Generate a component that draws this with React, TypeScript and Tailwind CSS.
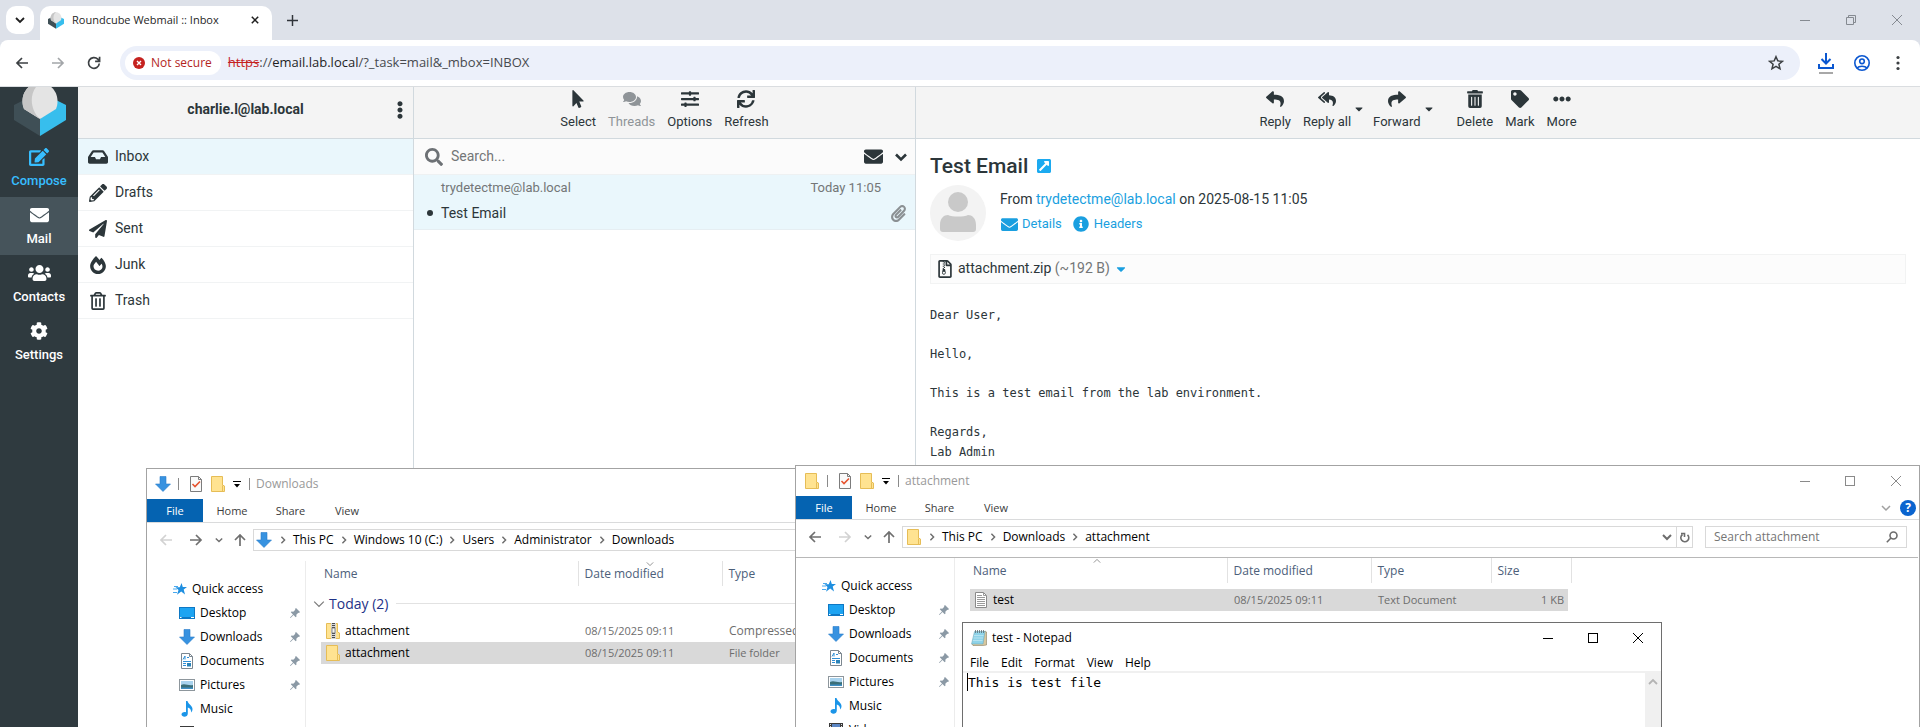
import React from 'react';
import {
  FaInbox, FaPencilAlt, FaPaperPlane, FaFireAlt, FaRegTrashAlt, FaMousePointer, FaComments, FaSlidersH, FaSync,
  FaReply, FaReplyAll, FaShare, FaTrashAlt, FaTag, FaEllipsisH, FaEllipsisV, FaInfoCircle, FaEnvelope, FaPaperclip,
  FaExternalLinkSquareAlt, FaRegFileArchive, FaCaretDown, FaSearch, FaEdit, FaUsers, FaCog, FaChevronDown,
} from 'react-icons/fa';

type IconType = React.ComponentType<{ className?: string }>;

const UI = "font-['Open_Sans',sans-serif]";

/* ---------- small drawings ---------- */

function CubeLogo({ className }: { className: string }) {
  return (
    <svg viewBox="0 0 52 53" className={className} aria-hidden="true">
      <path d="M0 22L10 17L26 36V53L0 37Z" fill="#3f4f56" />
      <path d="M52 22L42 17L26 36V53L52 37Z" fill="#37beed" />
      <path d="M26 0C36 0 43.500 8 43.500 18C43.500 21 43 23.500 42 26L26 36L10 26C9 23.500 8.500 21 8.500 18C8.500 8 16 0 26 0Z" fill="#e4e4e4" />
      <path d="M26 0C16 0 8.500 8 8.500 18C8.500 21 9 23.500 10 26L26 36C15 26 15 8 26 0Z" fill="#c6c6c6" />
    </svg>
  );
}

function Arrow({ className }: { className?: string }) {
  return (
    <svg viewBox="0 0 14 14" className={className} fill="none" stroke="currentColor" strokeWidth="1.7" aria-hidden="true">
      <path d="M13 7H2M7 2 L2 7 L7 12" />
    </svg>
  );
}

function Chevron({ className, width = 1.5 }: { className?: string; width?: number }) {
  return (
    <svg viewBox="0 0 10 10" className={className} fill="none" stroke="currentColor" strokeWidth={width} aria-hidden="true">
      <path d="M1 3 L5 7 L9 3" />
    </svg>
  );
}

function Minimize() {
  return <svg viewBox="0 0 10 10" className="size-[10px]" stroke="currentColor" shapeRendering="crispEdges" aria-hidden="true"><path d="M0 5.5H10" /></svg>;
}
function Maximize() {
  return <svg viewBox="0 0 10 10" className="size-[10px]" fill="none" stroke="currentColor" aria-hidden="true"><rect x="0.5" y="0.5" width="9" height="9" /></svg>;
}
function Cross() {
  return <svg viewBox="0 0 10 10" className="size-[10px]" fill="none" stroke="currentColor" aria-hidden="true"><path d="M0 0L10 10M10 0L0 10" /></svg>;
}

function BlueDown({ className = 'size-4' }: { className?: string }) {
  return (
    <svg viewBox="0 0 16 16" className={className} aria-hidden="true">
      <path d="M5 .5H11V8H15.500L8 15.500L.5 8H5Z" fill="#3792e0" stroke="#2a7cc9" strokeWidth=".6" />
    </svg>
  );
}
function Folder() {
  return (
    <svg viewBox="0 0 14 16" className="h-4 w-[14px]" aria-hidden="true">
      <path d="M.5 .5H11.500V9L13.500 10V15.500H.5Z" fill="#ffe391" stroke="#e6bd56" />
      <path d="M11.500 9.500V15.500" stroke="#e6bd56" />
    </svg>
  );
}
function ZipFolder() {
  return (
    <svg viewBox="0 0 14 16" className="h-4 w-[14px]" aria-hidden="true">
      <path d="M.5 .5H11.500V9L13.500 10V15.500H.5Z" fill="#ffe391" stroke="#e6bd56" />
      <rect x="5" width="5" height="16" fill="#d7d7d7" />
      <path d="M7.500 0V7M7.500 10V16" stroke="#4b4b4b" strokeWidth="3" strokeDasharray="1 1" />
      <rect x="6" y="5" width="3" height="5" fill="#f2f2f2" stroke="#666" strokeWidth=".7" />
    </svg>
  );
}
function CheckDoc() {
  return (
    <svg viewBox="0 0 12 16" className="h-4 w-3" fill="none" aria-hidden="true">
      <path d="M.5 .5H8.500L11.500 3.500V15.500H.5Z" fill="#fafafa" stroke="#7c7c7c" />
      <path d="M8.500 .5V3.500H11.500" stroke="#7c7c7c" />
      <path d="M2.500 8L5 10.500L10 5.500" stroke="#e6532f" strokeWidth="1.600" />
    </svg>
  );
}
function TextDoc() {
  return (
    <svg viewBox="0 0 12 16" className="h-4 w-3" fill="none" aria-hidden="true">
      <path d="M.5 .5H8.500L11.500 3.500V15.500H.5Z" fill="#fff" stroke="#8a8a8a" />
      <path d="M8.500 .5V3.500H11.500M2 3.500H7M2 5.500H10M2 7.500H10M2 9.500H10M2 11.500H10M2 13.500H10" stroke="#9a9a9a" />
    </svg>
  );
}
function DocumentsIcon() {
  return (
    <svg viewBox="0 0 12 16" className="h-4 w-3" fill="none" aria-hidden="true">
      <path d="M.5 .5H8.500L11.500 3.500V15.500H.5Z" fill="#fff" stroke="#7c8790" />
      <path d="M8.500 .5V3.500H11.500" stroke="#7c8790" />
      <path d="M2 6.500L4 3V6.500M6 4.500H8M2 8.500H10M2 10.500H5M2 12.500H5" stroke="#2f8fd6" />
      <rect x="6" y="10" width="4" height="3.500" fill="#2b83b8" />
    </svg>
  );
}
function DesktopIcon() {
  return (
    <svg viewBox="0 0 16 12" className="h-3 w-4" aria-hidden="true">
      <rect width="16" height="12" fill="#0e78c4" />
      <rect x="1" y="1" width="14" height="9" fill="#1da4f2" />
      <path d="M1 10.500H2.500M12 10.500H15" stroke="#fff" />
    </svg>
  );
}
function PicturesIcon() {
  return (
    <svg viewBox="0 0 16 12" className="h-3 w-4" aria-hidden="true">
      <rect x=".5" y=".5" width="15" height="11" fill="#fff" stroke="#8d969c" />
      <rect x="2" y="2" width="12" height="8" fill="#a9d3ee" />
      <path d="M2 6C6 4 9 7 14 6V10H2Z" fill="#3b6f78" />
      <path d="M2 8.500H14V10H2Z" fill="#3f8fc4" />
    </svg>
  );
}
function MusicIcon() {
  return (
    <svg viewBox="0 0 12 16" className="h-4 w-3" aria-hidden="true">
      <path d="M5 0H6.500C7 3 11.500 4.500 11.500 8C11.500 9.500 11 10.500 10 11.500C10.500 8.500 8.500 7 6.800 6.500V12.500C6.800 17 0 16.500 .5 13C1 11 3.500 10.500 5 11.200Z" fill="#1b95e8" />
    </svg>
  );
}
function VideosIcon() {
  return (
    <svg viewBox="0 0 14 14" className="size-[14px]" aria-hidden="true">
      <rect width="14" height="14" fill="#3a3a3a" />
      <path d="M1.500 1V14M12.500 1V14" stroke="#ddd" strokeDasharray="1 1" />
      <rect x="3" y="1" width="8" height="12" fill="#5b86c4" />
    </svg>
  );
}
function QuickStar() {
  return (
    <svg viewBox="0 0 14 12" className="h-3 w-[14px]" aria-hidden="true">
      <path d="M8.500 0L9.800 4H14L10.700 6.500L12 11.500L8.200 8.500L4 11.800L5.500 7L2.500 4.300H6.800Z" fill="#1f8fe0" />
      <path d="M1 3.500H5M0 6H4M0 9.500H4" stroke="#48a8ee" />
    </svg>
  );
}
function Pin() {
  return (
    <svg viewBox="0 0 10 10" className="size-[10px]" aria-hidden="true">
      <path d="M6 0L10 4L9 5L8.300 4.800L6.300 6.800L6.500 8.500L5.700 9.300L3.500 7L.5 10L0 9.500L3 6.500L.8 4.300L1.500 3.500L3.300 3.700L5.300 1.700L5 1Z" fill="#8b99a5" />
    </svg>
  );
}
function NotepadIcon() {
  return (
    <svg viewBox="0 0 16 16" className="size-4" aria-hidden="true">
      <path d="M14 1L15.500 2V15L12 15.500H2L1 14Z" fill="#d8c79e" stroke="#8c7f63" strokeWidth=".6" />
      <path d="M3.500 1.500H14L12 14H.5Z" fill="#8fd3e8" stroke="#6aa2b3" strokeWidth=".5" />
      <path d="M4.500 0V3M6.500 0V3M8.500 0V3M10.500 0V3M12.500 0V3" stroke="#5d6b70" strokeWidth=".8" />
      <path d="M3 5.500H12.500M2.500 8H12M2 10.500H11.500" stroke="#bfe7f3" strokeWidth=".8" />
    </svg>
  );
}

/* ---------- browser chrome ---------- */

function BrowserChrome() {
  return (
    <header className={`${UI} shrink-0`}>
      <div className="flex h-10 items-start bg-[#dde1e9] pt-[6px] pl-[6px]">
        <button aria-label="Search tabs" className="flex size-7 items-center justify-center rounded-[10px] bg-white text-[#1f1f1f]">
          <Chevron className="size-[10px]" width={1.8} />
        </button>
        <div className="ml-[6px] flex h-[34px] w-[232px] items-center rounded-t-[10px] bg-white pr-[10px] pl-2 pb-[6px]">
          <CubeLogo className="h-[17px] w-4" />
          <span className="ml-2 flex-1 truncate text-[11px] text-[#1f1f1f]">Roundcube Webmail :: Inbox</span>
          <button aria-label="Close tab" className="flex size-[14px] items-center justify-center text-[#1f1f1f]">
            <svg viewBox="0 0 10 10" className="size-2" stroke="currentColor" strokeWidth="1.900" aria-hidden="true"><path d="M1 1L9 9M9 1L1 9" /></svg>
          </button>
        </div>
        <button aria-label="New tab" className="ml-[14px] mt-[8px] flex size-3 items-center justify-center text-[#30343a]">
          <svg viewBox="0 0 12 12" className="size-[11px]" stroke="currentColor" strokeWidth="1.600" aria-hidden="true"><path d="M6 0V12M0 6H12" /></svg>
        </button>
        <div className="ml-auto flex h-7 text-[#858a91]">
          <button aria-label="Minimize" className="flex w-[46px] items-center justify-center"><Minimize /></button>
          <button aria-label="Restore" className="flex w-[46px] items-center justify-center">
            <svg viewBox="0 0 10 10" className="size-[10px]" fill="none" stroke="currentColor" aria-hidden="true"><path d="M.5 2.500H7.500V9.500H.5ZM2.500 2V.5H9.500V7.500H8" /></svg>
          </button>
          <button aria-label="Close" className="flex w-[46px] items-center justify-center"><Cross /></button>
        </div>
      </div>
      <div className="bg-[#dde1e9]">
        <div className="flex h-[47px] items-center rounded-t-lg border-b border-[#dadde0] bg-white pl-[15px] text-[#3c4043]">
          <button aria-label="Back" className="size-[14px]"><Arrow className="size-[14px]" /></button>
          <button aria-label="Forward" className="ml-[22px] size-[14px] text-[#a3a6a9]"><Arrow className="size-[14px] rotate-180" /></button>
          <button aria-label="Reload" className="ml-[22px] size-[14px]">
            <svg viewBox="0 0 14 14" className="size-[14px]" fill="none" stroke="currentColor" strokeWidth="1.700" aria-hidden="true"><path d="M12.300 7.500A5.400 5.400 0 1 1 10.800 3.200L12.500 5M12.600 .8V5.300H8.100" /></svg>
          </button>
          <div className="ml-[19px] flex h-[34px] flex-1 items-center rounded-full bg-[#ecf0fa] pr-[16px] pl-[5px]">
            <button className="flex h-6 items-center gap-[6px] rounded-full bg-white pr-[9px] pl-2 text-[12px] text-[#b3261e]">
              <svg viewBox="0 0 12 12" className="size-3" aria-hidden="true"><circle cx="6" cy="6" r="6" fill="#c5221f" /><path d="M4 4L8 8M8 4L4 8" stroke="#fff" strokeWidth="1.400" /></svg>
              Not secure
            </button>
            <div className="ml-[7px] flex-1 text-[13px] text-[#474a4f]">
              <span className="text-[#c5221f] line-through">https</span>://<span className="text-[#1f1f1f]">email.lab.local</span>/?_task=mail&amp;_mbox=INBOX
            </div>
            <button aria-label="Bookmark this tab">
              <svg viewBox="0 0 16 16" className="size-4" fill="none" stroke="#3c4043" strokeWidth="1.500" aria-hidden="true"><path d="M8 1.700L9.800 5.900L14.400 6.300L10.900 9.300L12 13.800L8 11.400L4 13.800L5.100 9.300L1.600 6.300L6.200 5.900Z" /></svg>
            </button>
          </div>
          <button aria-label="Downloads" className="ml-[18px]">
            <svg viewBox="0 0 16 22" className="h-[22px] w-4" fill="none" stroke="#0b57d0" strokeWidth="2" aria-hidden="true">
              <path d="M8 1V11M3.500 7L8 11.500L12.500 7M1 12V16H15V12" /><path d="M1 21H15" stroke="#a8a8a8" />
            </svg>
          </button>
          <button aria-label="Profile" className="ml-5">
            <svg viewBox="0 0 16 16" className="size-4" fill="none" stroke="#0b57d0" strokeWidth="1.600" aria-hidden="true"><circle cx="8" cy="8" r="7.200" /><circle cx="8" cy="6.300" r="2.300" /><path d="M3 13C5 10.600 11 10.600 13 13" /></svg>
          </button>
          <button aria-label="Browser menu" className="mr-5 ml-[26px]">
            <svg viewBox="0 0 4 16" className="h-4 w-1" fill="#3c4043" aria-hidden="true"><circle cx="2" cy="2.500" r="1.600" /><circle cx="2" cy="8" r="1.600" /><circle cx="2" cy="13.500" r="1.600" /></svg>
          </button>
        </div>
      </div>
    </header>
  );
}

/* ---------- webmail ---------- */

function TaskLink({ icon: Icon, label, tone, size }: { icon: IconType; label: string; tone: string; size: string }) {
  return (
    <a href="#" className={`flex h-[58px] flex-col items-center gap-1 pt-[8px] text-[13px] leading-5 font-medium ${tone}`}>
      <Icon className={`h-[20px] ${size}`} />
      {label}
    </a>
  );
}

function TaskBar() {
  return (
    <nav className="flex w-[78px] shrink-0 flex-col bg-[#2f3a3f]">
      <div className="flex h-[52px] items-end justify-center overflow-hidden pl-[2px] pb-[3px]">
        <CubeLogo className="h-[53px] w-[52px] shrink-0" />
      </div>
      <TaskLink icon={FaEdit} label="Compose" tone="text-[#37beff]" size="w-5" />
      <TaskLink icon={FaEnvelope} label="Mail" tone="bg-[#46545b] text-white" size="w-[19px]" />
      <TaskLink icon={FaUsers} label="Contacts" tone="text-white" size="w-[23px]" />
      <TaskLink icon={FaCog} label="Settings" tone="text-white" size="w-[18px]" />
    </nav>
  );
}

const folders: { icon: IconType; name: string }[] = [
  { icon: FaInbox, name: 'Inbox' },
  { icon: FaPencilAlt, name: 'Drafts' },
  { icon: FaPaperPlane, name: 'Sent' },
  { icon: FaFireAlt, name: 'Junk' },
  { icon: FaRegTrashAlt, name: 'Trash' },
];

function Folders() {
  return (
    <aside className="w-[336px] shrink-0 border-r border-[#d1d9de] bg-white">
      <div className="flex h-[52px] items-center border-b border-[#d1d9de] bg-[#f4f4f4] pb-[6px]">
        <h2 className="flex-1 pl-[26px] text-center text-[14px] font-bold">charlie.l@lab.local</h2>
        <button aria-label="Folder actions" className="flex w-[26px] justify-center"><FaEllipsisV className="size-[18px]" /></button>
      </div>
      <ul>
        {folders.map(({ icon: Icon, name }, i) => (
          <li key={name} className={`border-b border-[#f1f3f4] ${i === 0 ? 'bg-[#eaf7fc]' : ''}`}>
            <a href="#" className="flex h-[35px] items-center gap-[7px] pl-[10px] text-[14px]">
              <span className="flex w-5 justify-center"><Icon className={i === 0 ? 'size-5' : 'size-[18px]'} /></span>
              {name}
            </a>
          </li>
        ))}
      </ul>
    </aside>
  );
}

function Tool({ icon: Icon, label, muted }: { icon: IconType; label: string; muted?: boolean }) {
  return (
    <button className={`flex flex-col items-center gap-[5px] px-[6px] text-[13px] leading-[18px] ${muted ? 'text-[#8f9498]' : ''}`}>
      <Icon className="size-[18px]" />
      {label}
    </button>
  );
}

function MessageList() {
  return (
    <section className="w-[502px] shrink-0 border-r border-[#d1d9de] bg-white">
      <div className="flex h-[52px] items-start justify-center border-b border-[#d1d9de] bg-[#f4f4f4] pt-[3px]">
        <Tool icon={FaMousePointer} label="Select" />
        <Tool icon={FaComments} label="Threads" muted />
        <Tool icon={FaSlidersH} label="Options" />
        <Tool icon={FaSync} label="Refresh" />
      </div>
      <div className="flex h-9 items-center border-b border-[#eef1f2] bg-[#fbfbfb] pr-2 pl-[11px]">
        <FaSearch className="size-[18px] text-[#6d7175]" />
        <input aria-label="Search mail" placeholder="Search..." className="ml-2 min-w-0 flex-1 bg-transparent text-[14px] outline-none placeholder:text-[#737677]" />
        <button aria-label="Unread messages"><FaEnvelope className="size-[19px]" /></button>
        <button aria-label="Search options" className="ml-[12px]">
          <svg viewBox="0 0 12 12" className="size-3" fill="none" stroke="currentColor" strokeWidth="2.600" aria-hidden="true"><path d="M1 3.500L6 8.500L11 3.500" /></svg>
        </button>
      </div>
      <a href="#" className="block h-[55px] border-b border-[#e6eef2] bg-[#eaf7fc] pt-[3px] pr-[8px] pl-[15px]">
        <div className="flex pl-3 text-[13px] leading-5 text-[#737677]">
          <span className="flex-1">trydetectme@lab.local</span>
          <span className="pr-[26px]">Today 11:05</span>
        </div>
        <div className="mt-[5px] flex items-center text-[14px] leading-5">
          <span className="mr-[7px] -ml-[2px] size-[6px] rounded-full bg-[#2c363a]" />
          <span className="flex-1 pl-px">Test Email</span>
          <FaPaperclip className="size-[17px] text-[#8b9093]" />
        </div>
      </a>
    </section>
  );
}

function Message() {
  return (
    <main className="flex min-w-0 flex-1 flex-col bg-white">
      <div className="flex h-[52px] shrink-0 items-start justify-center border-b border-[#d1d9de] bg-[#f4f4f4] pt-[3px]">
        <Tool icon={FaReply} label="Reply" />
        <Tool icon={FaReplyAll} label="Reply all" />
        <button aria-label="Reply all options" className="mt-[13px] mr-[2px] -ml-1"><FaCaretDown className="size-3" /></button>
        <Tool icon={FaShare} label="Forward" />
        <button aria-label="Forward options" className="mt-[13px] mr-4 -ml-1"><FaCaretDown className="size-3" /></button>
        <Tool icon={FaTrashAlt} label="Delete" />
        <Tool icon={FaTag} label="Mark" />
        <Tool icon={FaEllipsisH} label="More" />
      </div>
      <div className="px-[14px] pt-[13px]">
        <h1 className="flex items-center gap-2 text-[21px] leading-7 font-medium">
          Test Email
          <a href="#" aria-label="Open in new window" className="text-[#1caaf0]"><FaExternalLinkSquareAlt className="size-4" /></a>
        </h1>
        <div className="mt-[5px] flex gap-[14px]">
          <svg viewBox="0 0 56 56" className="size-14" aria-hidden="true">
            <circle cx="28" cy="28" r="28" fill="#f3f3f3" />
            <circle cx="28" cy="17" r="10" fill="#c9c9c9" />
            <path d="M10 44V40C10 33 14 30 18 30C22 32 34 32 38 30C42 30 46 33 46 40V44C46 46 45 47 43 47H13C11 47 10 46 10 44Z" fill="#c9c9c9" />
          </svg>
          <div className="pt-1">
            <p className="text-[14px] leading-5">From <a href="#" className="text-[#1a9fe0]">trydetectme@lab.local</a> on 2025-08-15 11:05</p>
            <div className="mt-[5px] flex gap-[11px] pl-px text-[13px] leading-5 text-[#1a9fe0]">
              <a href="#" className="flex items-center gap-1"><FaEnvelope className="size-[17px]" />Details</a>
              <a href="#" className="flex items-center gap-[5px]"><FaInfoCircle className="size-4" />Headers</a>
            </div>
          </div>
        </div>
        <div className="mt-[13px] flex h-[30px] items-center border border-[#f2f3f3] bg-[#fcfcfc] pb-px pl-[5px] text-[14px]">
          <FaRegFileArchive className="size-[18px]" />
          <a href="#" className="ml-1">attachment.zip <span className="text-[#737677]">(~192 B)</span></a>
          <button aria-label="Attachment options" className="ml-1 text-[#1a9fe0]"><FaCaretDown className="size-[14px]" /></button>
        </div>
        <div className="mt-[21px] flex flex-col gap-[19px] font-['DejaVu_Sans_Mono',monospace] text-[12px] leading-5">
          <p>Dear User,</p>
          <p>Hello,</p>
          <p>This is a test email from the lab environment.</p>
          <p>Regards,<br />Lab Admin</p>
        </div>
      </div>
    </main>
  );
}

/* ---------- file explorer ---------- */

function TitleTools({ icon, title }: { icon: React.ReactNode; title: string }) {
  return (
    <div className="flex h-[30px] shrink-0 items-center pl-2 text-[12px] text-[#999]">
      <span className="flex w-4 justify-center">{icon}</span>
      <span className="ml-[7px] h-3 w-px bg-[#8a8a8a]" />
      <span className="ml-[11px]"><CheckDoc /></span>
      <span className="ml-[9px]"><Folder /></span>
      <button aria-label="Customize toolbar" className="ml-2 text-black">
        <svg viewBox="0 0 8 7" className="h-[7px] w-2" aria-hidden="true"><path d="M0 .5H8" stroke="currentColor" /><path d="M1 3H7L4 6.500Z" fill="currentColor" /></svg>
      </button>
      <span className="ml-2 h-3 w-px bg-[#8a8a8a]" />
      <span className="ml-[6px]">{title}</span>
    </div>
  );
}

function RibbonTabs({ children }: { children?: React.ReactNode }) {
  return (
    <div className="flex h-[24px] shrink-0 items-center border-b border-[#dadbdc] text-[11px] text-[#3b3b3b]">
      <button className="h-full w-14 bg-[#0563b1] pt-px text-white">File</button>
      <button className="h-full w-[58px] pt-px">Home</button>
      <button className="h-full w-[59px] pt-px">Share</button>
      <button className="h-full w-[54px] pt-px">View</button>
      {children}
    </div>
  );
}

function Crumbs({ items }: { items: string[] }) {
  return (
    <ol className="flex items-center pl-px text-black">
      {items.map((item) => (
        <li key={item} className="flex items-center">
          <Chevron className="mx-[6px] size-2 -rotate-90 text-[#6d6d6d]" width={1.8} />
          <a href="#">{item}</a>
        </li>
      ))}
    </ol>
  );
}

function NavButtons({ canBack }: { canBack: boolean }) {
  return (
    <div className="flex w-[106px] shrink-0 items-center pl-3 text-[#6f6f6f]">
      <button aria-label="Back" className={canBack ? '' : 'text-[#d2d2d2]'}><Arrow className="size-[14px]" /></button>
      <button aria-label="Forward" className={canBack ? 'ml-4 text-[#d2d2d2]' : 'ml-4'}><Arrow className="size-[14px] rotate-180" /></button>
      <button aria-label="Recent locations" className="ml-3"><Chevron className="size-2" width={1.8} /></button>
      <button aria-label="Up" className="ml-[10px]"><Arrow className="size-[14px] rotate-90" /></button>
    </div>
  );
}

const places = [
  { name: 'Desktop', icon: <DesktopIcon />, pinned: true },
  { name: 'Downloads', icon: <BlueDown />, pinned: true },
  { name: 'Documents', icon: <DocumentsIcon />, pinned: true },
  { name: 'Pictures', icon: <PicturesIcon />, pinned: true },
  { name: 'Music', icon: <MusicIcon />, pinned: false },
  { name: 'Videos', icon: <VideosIcon />, pinned: false },
];

function Places() {
  return (
    <nav className="w-[159px] shrink-0 border-r border-[#ececec] pt-4 text-[12px] text-black">
      <a href="#" className="flex h-6 items-center gap-[5px] pl-[26px]"><QuickStar />Quick access</a>
      {places.map((p) => (
        <a key={p.name} href="#" className="flex h-6 items-center pl-8">
          <span className="flex w-4 justify-center">{p.icon}</span>
          <span className="flex-1 pl-[5px]">{p.name}</span>
          {p.pinned && <span className="pr-[5px]"><Pin /></span>}
        </a>
      ))}
    </nav>
  );
}

function DownloadsWindow() {
  return (
    <section aria-label="Downloads" className={`${UI} absolute top-[468px] bottom-0 left-[146px] flex w-[760px] flex-col overflow-hidden border-t border-l border-[#a3a3a3] bg-white`}>
      <TitleTools icon={<BlueDown />} title="Downloads" />
      <RibbonTabs />
      <div className="mt-[6px] flex h-[22px] shrink-0 items-center text-[12px]">
        <NavButtons canBack={false} />
        <div className="flex h-full flex-1 items-center border border-[#d9d9d9] pl-[2px]">
          <BlueDown />
          <Crumbs items={['This PC', 'Windows 10 (C:)', 'Users', 'Administrator', 'Downloads']} />
        </div>
      </div>
      <div className="mt-[10px] flex min-h-0 flex-1">
        <Places />
        <div className="flex-1 pl-[15px] text-[12px]">
          <table className="w-full table-fixed border-collapse text-left">
            <colgroup><col className="w-[257px]" /><col className="w-[144px]" /><col /></colgroup>
            <thead>
              <tr className="h-[25px] text-[#4c607a]">
                <th className="border-r border-[#e2e2e2] font-normal">
                  <span className="pl-[3px]">Name</span>
                </th>
                <th className="relative border-r border-[#e2e2e2] pl-[6px] font-normal">
                  <Chevron className="absolute -top-px left-[67px] size-2 text-[#7a7a7a]" width={1} />
                  Date modified
                </th>
                <th className="pl-[6px] font-normal">Type</th>
              </tr>
            </thead>
            <tbody className="text-[11px] text-[#6d6d6d]">
              <tr className="h-[34px]">
                <td colSpan={3} className="pt-px">
                  <div className="-ml-2 flex items-center text-[14px] leading-5 text-[#1e3287]">
                    <Chevron className="mr-1 size-3 text-[#7a7a7a]" width={1} />
                    Today (2)
                    <span className="ml-2 h-px flex-1 bg-[#e2e2e2]" />
                  </div>
                </td>
              </tr>
              <tr className="h-[22px]">
                <td><span className="flex items-center gap-[5px] pl-[5px] text-[12px] text-black"><ZipFolder />attachment</span></td>
                <td className="pl-[7px]">08/15/2025 09:11</td>
                <td className="pl-[7px] text-[12px]">Compressed</td>
              </tr>
              <tr className="h-[22px] bg-[#d9d9d9]">
                <td><span className="flex items-center gap-[5px] pl-[5px] text-[12px] text-black"><Folder />attachment</span></td>
                <td className="pl-[7px]">08/15/2025 09:11</td>
                <td className="pl-[7px]">File folder</td>
              </tr>
            </tbody>
          </table>
        </div>
      </div>
    </section>
  );
}

function AttachmentWindow() {
  return (
    <section aria-label="attachment" className={`${UI} absolute top-[465px] right-0 bottom-0 left-[795px] flex flex-col overflow-hidden border-t border-r border-l border-[#a3a3a3] bg-white`}>
      <div className="flex shrink-0 justify-between">
        <TitleTools icon={<Folder />} title="attachment" />
        <div className="flex h-[30px] pr-px text-[#8a8a8a]">
          <button aria-label="Minimize" className="flex w-[45px] items-center justify-center"><Minimize /></button>
          <button aria-label="Maximize" className="flex w-[46px] items-center justify-center"><Maximize /></button>
          <button aria-label="Close" className="flex w-[45px] items-center justify-center"><Cross /></button>
        </div>
      </div>
      <RibbonTabs>
        <button aria-label="Expand the ribbon" className="ml-auto text-[#a0a0a0]"><Chevron className="size-[10px]" /></button>
        <button aria-label="Help" className="mr-[3px] ml-[9px] size-4 rounded-full bg-[#0a64cf] text-[12px] leading-4 font-bold text-white">?</button>
      </RibbonTabs>
      <div className="mt-[6px] flex h-[22px] shrink-0 items-center text-[12px]">
        <NavButtons canBack />
        <div className="flex h-full flex-1 items-center border border-[#d9d9d9] pl-1">
          <Folder />
          <Crumbs items={['This PC', 'Downloads', 'attachment']} />
          <button aria-label="Previous locations" className="mr-1 ml-auto text-[#6d6d6d]"><Chevron className="size-[10px]" width={2} /></button>
          <button aria-label="Refresh" className="flex h-full w-4 items-center justify-center border-l border-[#d9d9d9] text-[#6d6d6d]">
            <svg viewBox="0 0 10 11" className="h-[11px] w-[10px]" fill="none" stroke="currentColor" strokeWidth="1.600" aria-hidden="true"><path d="M2.500 2.500A4 4 0 1 0 7.500 2.800M1 1.500H4.500V5" /></svg>
          </button>
        </div>
        <label className="mr-3 ml-3 flex h-full w-[202px] items-center border border-[#d9d9d9] pr-2 pl-2">
          <input aria-label="Search attachment" placeholder="Search attachment" className="min-w-0 flex-1 bg-transparent outline-none placeholder:text-[#757575]" />
          <svg viewBox="0 0 12 12" className="size-3" fill="none" stroke="#6d6d6d" strokeWidth="1.600" aria-hidden="true"><circle cx="7.500" cy="4.500" r="3.500" /><path d="M5 7L.8 11.200" /></svg>
        </label>
      </div>
      <div className="mr-px mt-[9px] flex min-h-0 flex-1 border-t border-[#b8b8b8]">
        <Places />
        <div className="flex-1 pl-[15px] text-[12px]">
          <table className="w-[601px] table-fixed border-collapse text-left">
            <colgroup><col className="w-[257px]" /><col className="w-[144px]" /><col className="w-[120px]" /><col className="w-[80px]" /></colgroup>
            <thead>
              <tr className="h-[25px] text-[#4c607a]">
                <th className="relative border-r border-[#e2e2e2] pl-[3px] font-normal">
                  Name
                  <Chevron className="absolute -top-px left-[123px] size-2 rotate-180 text-[#7a7a7a]" width={1} />
                </th>
                <th className="border-r border-[#e2e2e2] pl-[6px] font-normal">Date modified</th>
                <th className="border-r border-[#e2e2e2] pl-[6px] font-normal">Type</th>
                <th className="border-r border-[#e2e2e2] pl-[6px] font-normal">Size</th>
              </tr>
            </thead>
          </table>
          <table className="mt-[6px] w-[598px] table-fixed border-collapse text-left">
            <colgroup><col className="w-[257px]" /><col className="w-[144px]" /><col className="w-[120px]" /><col /></colgroup>
            <tbody>
              <tr className="h-[22px] bg-[#d9d9d9] text-[11px] text-[#6d6d6d]">
                <td><span className="flex items-center gap-[6px] pl-[5px] text-[12px] text-black"><TextDoc />test</span></td>
                <td className="pl-[7px]">08/15/2025 09:11</td>
                <td className="pl-[7px]">Text Document</td>
                <td className="pr-1 text-right">1 KB</td>
              </tr>
            </tbody>
          </table>
        </div>
      </div>
    </section>
  );
}

function NotepadWindow() {
  return (
    <section aria-label="test - Notepad" className={`${UI} absolute top-[622px] bottom-0 left-[962px] flex w-[700px] flex-col overflow-hidden border-t border-r border-l border-[#6e6e6e] bg-white text-[12px] text-black`}>
      <div className="flex h-[30px] shrink-0 items-center pl-2">
        <NotepadIcon />
        <span className="flex-1 pl-[5px]">test - Notepad</span>
        <div className="flex h-full">
          <button aria-label="Minimize" className="flex w-[45px] items-center justify-center"><Minimize /></button>
          <button aria-label="Maximize" className="flex w-[45px] items-center justify-center"><Maximize /></button>
          <button aria-label="Close" className="flex w-[46px] items-center justify-center"><Cross /></button>
        </div>
      </div>
      <div className="flex h-5 shrink-0 items-center gap-3 border-b-2 border-[#f0f0f0] pt-[2px] pl-[7px]">
        {['File', 'Edit', 'Format', 'View', 'Help'].map((m) => <button key={m}>{m}</button>)}
      </div>
      <div className="flex min-h-0 flex-1">
        <div className="flex flex-1 pl-1">
          <span className="h-[18px] w-px bg-black" />
          <textarea aria-label="Text" defaultValue="This is test file" className="h-full flex-1 resize-none bg-transparent font-['DejaVu_Sans_Mono',monospace] text-[13px] leading-5 outline-none" />
        </div>
        <div className="flex w-4 justify-center bg-[#f0f0f0] pt-1 text-[#b4b4b4]"><Chevron className="size-[10px] rotate-180" width={1.8} /></div>
      </div>
    </section>
  );
}

export default function App() {
  return (
    <div className="relative flex h-screen flex-col overflow-hidden bg-white">
      <BrowserChrome />
      <div className="flex min-h-0 flex-1 font-[Roboto,sans-serif] text-[#2c363a]">
        <TaskBar />
        <Folders />
        <MessageList />
        <Message />
      </div>
      <DownloadsWindow />
      <AttachmentWindow />
      <NotepadWindow />
    </div>
  );
}
